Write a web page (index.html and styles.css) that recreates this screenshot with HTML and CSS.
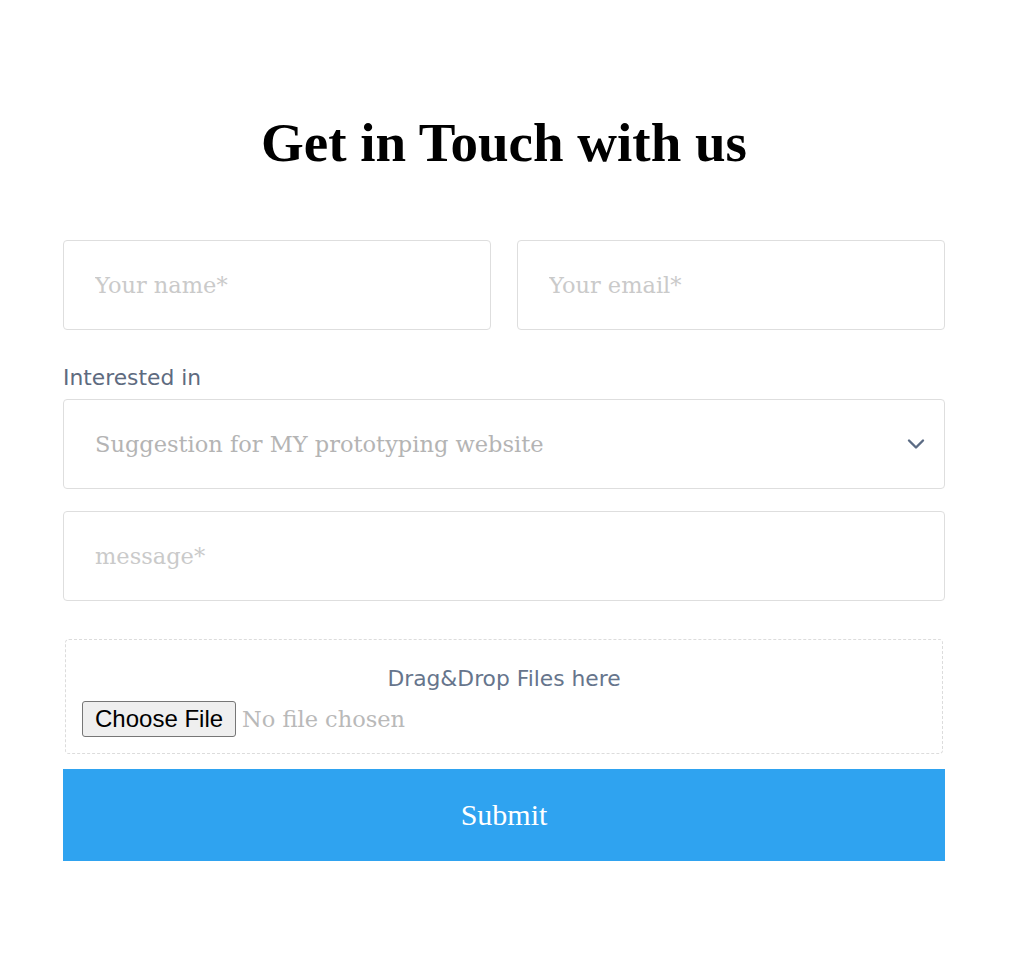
FILE: index.html
```html
<!DOCTYPE html>
<html lang="en">
<head>
<meta charset="utf-8">
<title>Contact</title>
<link rel="stylesheet" href="styles.css">
</head>
<body>
<main class="page">
  <form class="contact">
    <h1 class="title">Get in Touch with us</h1>
    <div class="row">
      <input class="field" type="text" placeholder="Your name*">
      <input class="field" type="email" placeholder="Your email*">
    </div>
    <label class="label">Interested in</label>
    <div class="select">
      <span class="select-text">Suggestion for MY prototyping website</span>
      <svg class="chevron" width="18" height="12" viewBox="0 0 18 12"><path d="M2 2.5 L9 9.5 L16 2.5" fill="none" stroke="#5b6b84" stroke-width="2.4" stroke-linecap="round" stroke-linejoin="round"/></svg>
    </div>
    <input class="field message" type="text" placeholder="message*">
    <div class="drop">
      <div class="drop-title">Drag&amp;Drop Files here</div>
      <div class="file-row">
        <span class="file-btn">Choose File</span>
        <span class="file-name">No file chosen</span>
      </div>
    </div>
    <button class="submit" type="button">Submit</button>
  </form>
</main>
</body>
</html>
```
FILE: styles.css
```css
* { box-sizing: border-box; }
body { margin: 0; background: #fff; }
.page { width: 1008px; }
.contact { width: 882px; margin: 0 auto; padding-top: 108px; display: flex; flex-direction: column; }
.title {
  font-family: "Liberation Serif", "Times New Roman", serif;
  font-weight: bold; font-size: 55px; line-height: 70px;
  text-align: center; margin: 0 0 62px; color: #000;
}
.row { display: grid; grid-template-columns: 1fr 1fr; gap: 26px; }
.field {
  display: block; width: 100%; height: 90px;
  border: 1px solid #dedede; border-radius: 4px;
  padding: 0 31px; background: #fff; outline: none;
  font-family: "DejaVu Serif", serif; font-size: 22.5px; color: #333;
}
.field::placeholder { color: #cacaca; }
.label {
  font-family: "DejaVu Sans", sans-serif; font-size: 21.8px; color: #5e6b7f;
  margin-top: 35px; line-height: 26px; margin-bottom: 8px;
}
.select {
  height: 90px; border: 1px solid #dedede; border-radius: 4px;
  display: flex; align-items: center; justify-content: space-between;
  padding: 0 19px 0 31px;
}
.select-text { font-family: "DejaVu Serif", serif; font-size: 22.5px; color: #b4b4b4; }
.message { margin-top: 22px; }
.drop {
  margin: 38px 2px 0; height: 115px;
  border: 1px dashed #dcdcdc; border-radius: 4px;
  padding: 24px 16px 0;
}
.drop-title {
  font-family: "DejaVu Sans", sans-serif; font-size: 21.8px; color: #66758c;
  text-align: center; line-height: 30px;
}
.file-row { display: flex; align-items: center; gap: 6px; margin-top: 7px; }
.file-btn {
  font-family: "Liberation Sans", Arial, sans-serif; font-size: 24px; color: #000;
  background: #efefef; border: 1px solid #767676; border-radius: 3px;
  padding: 3px 12px; line-height: 28px;
}
.file-name { font-family: "DejaVu Serif", serif; font-size: 22.5px; color: #b9b9b9; }
.submit {
  margin-top: 15px; height: 92px; width: 100%;
  background: #2fa3f0; border: none; color: #fff;
  font-family: "Liberation Serif", "Times New Roman", serif; font-size: 30px;
}
```
